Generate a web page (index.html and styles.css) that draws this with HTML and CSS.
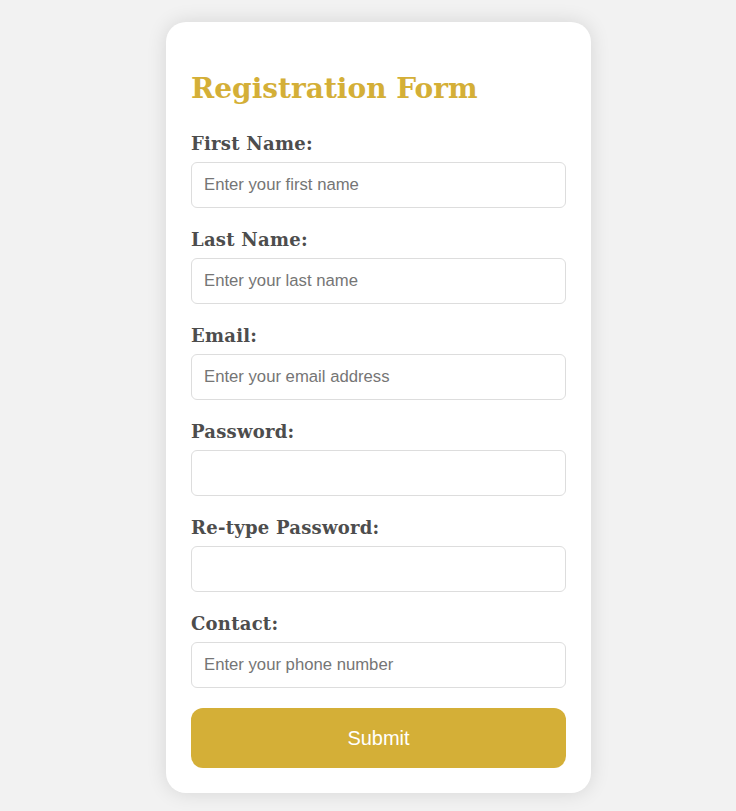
FILE: index.html
```html
<!DOCTYPE html>
<html lang="en">
<head>
<meta charset="utf-8">
<title>Registration Form</title>
<link rel="stylesheet" href="styles.css">
</head>
<body>
<main class="page">
  <form class="card">
    <h2 class="title">Registration Form</h2>
    <label class="label" for="fn">First Name:</label>
    <input class="field" id="fn" type="text" placeholder="Enter your first name">
    <label class="label" for="ln">Last Name:</label>
    <input class="field" id="ln" type="text" placeholder="Enter your last name">
    <label class="label" for="em">Email:</label>
    <input class="field" id="em" type="email" placeholder="Enter your email address">
    <label class="label" for="pw">Password:</label>
    <input class="field" id="pw" type="password">
    <label class="label" for="pw2">Re-type Password:</label>
    <input class="field" id="pw2" type="password">
    <label class="label" for="ct">Contact:</label>
    <input class="field" id="ct" type="tel" placeholder="Enter your phone number">
    <button class="submit" type="button">Submit</button>
  </form>
</main>
</body>
</html>
```

FILE: styles.css
```css
html, body {
  margin: 0;
  padding: 0;
  background: #f2f2f2;
}
.page {
  display: flex;
  justify-content: center;
  padding: 22px 0 18px 21px;
}
.card {
  width: 425px;
  box-sizing: border-box;
  background: #fff;
  border-radius: 20px;
  padding: 25px;
  box-shadow: 0 0 20px rgba(0, 0, 0, 0.12);
  display: flex;
  flex-direction: column;
}
.title {
  font-family: "DejaVu Serif", serif;
  font-weight: bold;
  font-size: 28px;
  color: #d4af37;
  margin: 26px 0 28px;
  line-height: 32px;
}
.label {
  font-family: "DejaVu Serif", serif;
  font-weight: bold;
  font-size: 18px;
  line-height: 22px;
  letter-spacing: 0.25px;
  color: #4d4d4d;
  margin-bottom: 7px;
}
.field {
  height: 46px;
  box-sizing: border-box;
  border: 1px solid #ddd;
  border-radius: 6px;
  padding: 0 12px;
  font-family: "Liberation Sans", Arial, sans-serif;
  font-size: 16.7px;
  margin: 0 0 21px;
  outline: none;
}
.field:last-of-type {
  margin-bottom: 20px;
}
.field::placeholder {
  color: #757575;
}
.submit {
  height: 60px;
  border: none;
  border-radius: 12px;
  background: #d4af37;
  color: #fff;
  font-family: "Liberation Sans", Arial, sans-serif;
  font-size: 20px;
}
```
